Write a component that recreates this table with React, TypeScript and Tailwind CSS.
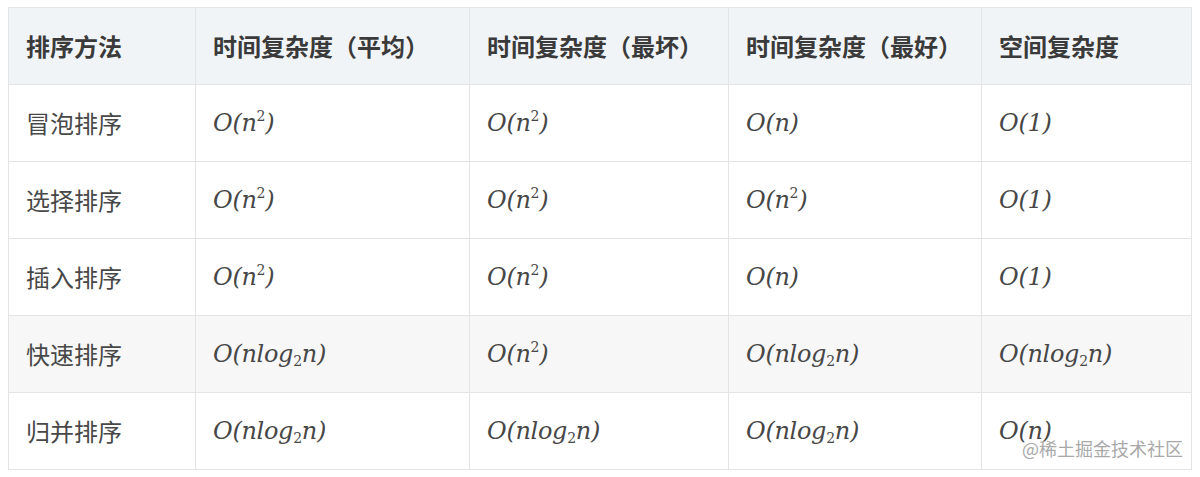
const cjk = "font-['Noto_Sans_CJK_SC','Noto_Sans',sans-serif]";

const N2 = () => (
  <>
    O(n<sup className="text-[14px] relative -top-[1px] align-super leading-none not-italic">2</sup>)
  </>
);
const NLog = () => (
  <>
    O(nlog<sub className="text-[14px] relative -top-[2px] align-sub leading-none not-italic">2</sub>n)
  </>
);
const On = () => <>O(n)</>;
const O1 = () => <>O(1)</>;

const rows = [
  { name: "冒泡排序", cells: [<N2 />, <N2 />, <On />, <O1 />], gray: false },
  { name: "选择排序", cells: [<N2 />, <N2 />, <N2 />, <O1 />], gray: false },
  { name: "插入排序", cells: [<N2 />, <N2 />, <On />, <O1 />], gray: false },
  { name: "快速排序", cells: [<NLog />, <N2 />, <NLog />, <NLog />], gray: true },
  { name: "归并排序", cells: [<NLog />, <NLog />, <NLog />, <On />], gray: false },
];

const heads = ["排序方法", "时间复杂度（平均）", "时间复杂度（最坏）", "时间复杂度（最好）", "空间复杂度"];
const widths = ["w-[187px]", "w-[274px]", "w-[259px]", "w-[253px]", "w-[210px]"];

export default function App() {
  return (
    <div className="w-[1200px] h-[477px] bg-white pl-[8px] pt-[7px] relative">
      <table className="border-collapse table-fixed w-[1184px]">
        <thead>
          <tr className="h-[77px] bg-[#f1f4f7]">
            {heads.map((h, i) => (
              <th
                key={h}
                className={`${widths[i]} border border-[#e2e4e6] px-[17px] text-left align-middle text-[24px] font-bold text-[#3a3a3a] ${cjk}`}
              >
                {h}
              </th>
            ))}
          </tr>
        </thead>
        <tbody>
          {rows.map((r) => (
            <tr key={r.name} className={`h-[77px] ${r.gray ? "bg-[#f7f7f7]" : "bg-white"}`}>
              <td className={`border border-[#e2e4e6] px-[17px] align-middle text-[24px] text-[#484848] ${cjk}`}>
                {r.name}
              </td>
              {r.cells.map((c, j) => (
                <td
                  key={j}
                  className="border border-[#e2e4e6] px-[17px] align-middle text-[24px] italic text-[#474747] font-['DejaVu_Serif',serif] tracking-[-0.3px]"
                >
                  {c}
                </td>
              ))}
            </tr>
          ))}
        </tbody>
      </table>
      <div className={`absolute right-[17px] bottom-[15px] text-[18px] text-[#a9a9a9] ${cjk}`}>@稀土掘金技术社区</div>
    </div>
  );
}
